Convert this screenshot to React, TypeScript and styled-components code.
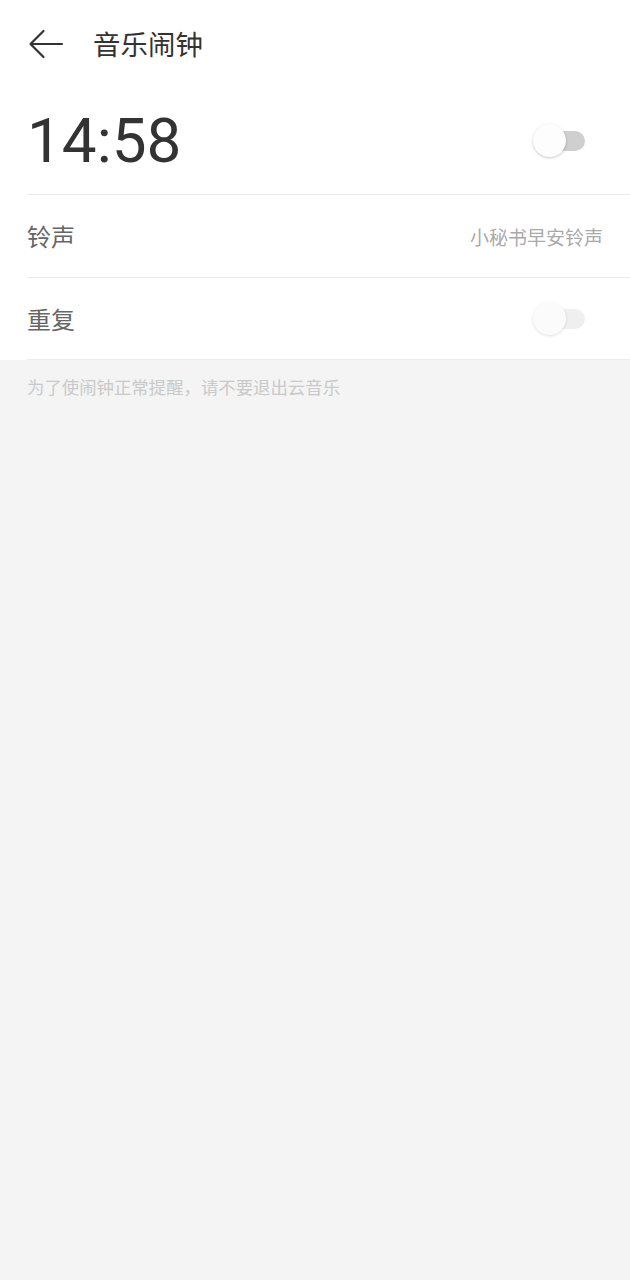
import React from "react";
import styled, { createGlobalStyle } from "styled-components";

const Global = createGlobalStyle`
  html, body { margin: 0; padding: 0; background: #f4f4f4; }
  body { font-family: Roboto, "Noto Sans CJK SC", "Noto Sans", sans-serif; }
  * { box-sizing: border-box; }
`;

const Page = styled.div`
  width: 630px;
  min-height: 1280px;
  background: #f4f4f4;
`;

const Card = styled.div`
  background: #fff;
`;

const Header = styled.div`
  height: 88px;
  display: flex;
  align-items: center;
  padding-left: 28px;
  gap: 29px;
`;

const Title = styled.div`
  font-family: "Noto Sans CJK SC", sans-serif;
  font-size: 27.5px;
  color: #333;
  line-height: 1;
  margin-top: -1px;
`;

const Row = styled.div<{ $h: number }>`
  height: ${(p) => p.$h}px;
  margin-left: 27px;
  display: flex;
  align-items: center;
  justify-content: space-between;
  border-bottom: 1px solid #ebebeb;
`;

const Time = styled.div`
  font-family: Roboto, sans-serif;
  font-size: 62px;
  color: #333;
  line-height: 1;
`;

const Label = styled.div`
  font-family: "Noto Sans CJK SC", sans-serif;
  font-size: 24px;
  color: #666;
  line-height: 1;
`;

const Value = styled.div`
  font-family: "Noto Sans CJK SC", sans-serif;
  font-size: 19px;
  color: #aaa;
  margin-right: 27px;
  line-height: 1;
`;

const SwitchWrap = styled.div`
  position: relative;
  width: 54px;
  height: 34px;
  margin-right: 45px;
`;

const Track = styled.div<{ $dim?: boolean }>`
  position: absolute;
  left: 10px;
  right: 0;
  top: 7px;
  height: 20px;
  border-radius: 10px;
  background: ${(p) => (p.$dim ? "#efefef" : "#cfcfcf")};
`;

const Knob = styled.div<{ $dim?: boolean }>`
  position: absolute;
  left: 2px;
  top: 0;
  width: 33px;
  height: 33px;
  border-radius: 50%;
  background: ${(p) => (p.$dim ? "#fbfbfb" : "#fdfdfd")};
  box-shadow: 0 1px 3px rgba(0, 0, 0, ${(p) => (p.$dim ? 0.12 : 0.22)});
`;

const Note = styled.div`
  font-family: "Noto Sans CJK SC", sans-serif;
  font-size: 17.4px;
  color: #c9c9c9;
  padding: 18px 0 0 27px;
  line-height: 1;
`;

const Switch = ({ dim }: { dim?: boolean }) => (
  <SwitchWrap>
    <Track $dim={dim} />
    <Knob $dim={dim} />
  </SwitchWrap>
);

export default function App() {
  return (
    <Page>
      <Global />
      <Card>
        <Header>
          <svg width="36" height="30" viewBox="0 0 36 30" fill="none">
            <path d="M34 15H2.5M15.5 2L2.5 15L15.5 28" stroke="#333" strokeWidth="2.2" strokeLinecap="round" strokeLinejoin="round" />
          </svg>
          <Title>音乐闹钟</Title>
        </Header>
        <Row $h={107}>
          <Time>14:58</Time>
          <Switch />
        </Row>
        <Row $h={83}>
          <Label>铃声</Label>
          <Value>小秘书早安铃声</Value>
        </Row>
        <Row $h={82}>
          <Label>重复</Label>
          <Switch dim />
        </Row>
      </Card>
      <Note>为了使闹钟正常提醒，请不要退出云音乐</Note>
    </Page>
  );
}
